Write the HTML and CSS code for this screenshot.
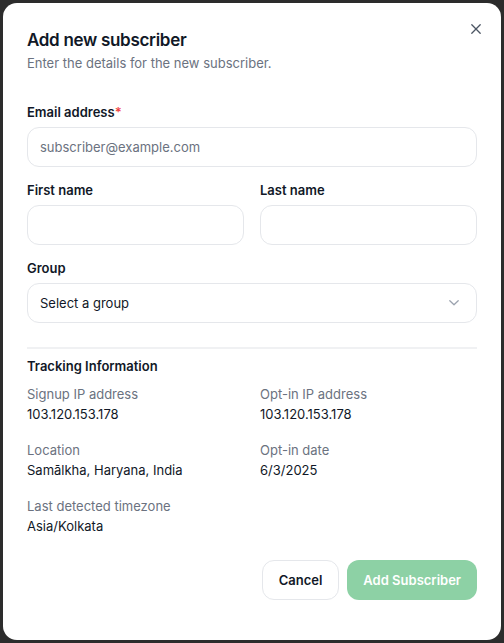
FILE: index.html
```html
<!DOCTYPE html>
<html lang="en">
<head>
<meta charset="utf-8">
<title>Add new subscriber</title>
<link rel="stylesheet" href="styles.css">
</head>
<body>
<div class="backdrop">
  <div class="modal" role="dialog">
    <button class="close" aria-label="Close">
      <svg width="12" height="12" viewBox="0 0 12 12"><path d="M1.8 1.8 L10.2 10.2 M10.2 1.8 L1.8 10.2" stroke="#4b5563" stroke-width="1.3" stroke-linecap="round"/></svg>
    </button>
    <header class="head">
      <h2 class="title">Add new subscriber</h2>
      <p class="subtitle">Enter the details for the new subscriber.</p>
    </header>
    <form class="form">
      <div class="field">
        <label class="label">Email address<span class="req">*</span></label>
        <div class="input placeholder">subscriber@example.com</div>
      </div>
      <div class="row">
        <div class="field">
          <label class="label">First name</label>
          <div class="input"></div>
        </div>
        <div class="field">
          <label class="label">Last name</label>
          <div class="input"></div>
        </div>
      </div>
      <div class="field">
        <label class="label">Group</label>
        <div class="input select">
          <span>Select a group</span>
          <svg width="12" height="8" viewBox="0 0 12 8"><path d="M1.8 1.8 L6 5.8 L10.2 1.8" fill="none" stroke="#9ca3af" stroke-width="1.3" stroke-linecap="round" stroke-linejoin="round"/></svg>
        </div>
      </div>
    </form>
    <section class="tracking">
      <h3 class="section-title">Tracking Information</h3>
      <div class="grid">
        <div class="item"><div class="k">Signup IP address</div><div class="v">103.120.153.178</div></div>
        <div class="item"><div class="k">Opt-in IP address</div><div class="v">103.120.153.178</div></div>
        <div class="item"><div class="k">Location</div><div class="v">Samālkha, Haryana, India</div></div>
        <div class="item"><div class="k">Opt-in date</div><div class="v">6/3/2025</div></div>
        <div class="item"><div class="k">Last detected timezone</div><div class="v">Asia/Kolkata</div></div>
      </div>
    </section>
    <footer class="actions">
      <button class="btn btn-cancel">Cancel</button>
      <button class="btn btn-primary">Add Subscriber</button>
    </footer>
  </div>
</div>
</body>
</html>
```

FILE: styles.css
```css
* { box-sizing: border-box; }
html, body {
  margin: 0;
  height: 643px;
  overflow: hidden;
}
body {
  background: #2c2c2c;
  font-family: Inter, "Noto Sans", sans-serif;
  color: #111827;
}
.backdrop {
  padding: 3px 3px 0 3px;
  height: 643px;
}
.modal {
  position: relative;
  width: 498px;
  background: #fff;
  border-radius: 14px;
  padding: 25px 24px 40px 24px;
}
.close {
  position: absolute;
  top: 19px;
  right: 18px;
  width: 14px;
  height: 14px;
  padding: 0;
  border: 0;
  background: transparent;
  display: flex;
  align-items: center;
  justify-content: center;
}
.head { margin-bottom: 29px; }
.title {
  margin: 0;
  font-size: 17px;
  letter-spacing: -0.3px;
  line-height: 24px;
  font-weight: 600;
  color: #111827;
}
.subtitle {
  margin: 1px 0 0;
  font-size: 13px;
  line-height: 20px;
  color: #6b7280;
}
.form {
  display: flex;
  flex-direction: column;
  gap: 13px;
}
.row {
  display: grid;
  grid-template-columns: 1fr 1fr;
  gap: 16px;
}
.field {
  display: flex;
  flex-direction: column;
  gap: 5px;
}
.label {
  font-size: 13px;
  line-height: 20px;
  font-weight: 600;
  color: #111827;
}
.req { color: #ef4444; }
.input {
  height: 40px;
  border: 1px solid #e5e7eb;
  border-radius: 12px;
  padding: 0 12px;
  display: flex;
  align-items: center;
  font-size: 13px;
  color: #111827;
}
.placeholder { color: #6b7280; }
.select {
  justify-content: space-between;
  padding-right: 16px;
}
.tracking {
  margin-top: 24px;
  border-top: 2px solid #f0f1f3;
  padding-top: 7px;
}
.section-title {
  margin: 0 0 9px;
  font-size: 13px;
  line-height: 20px;
  font-weight: 600;
  color: #111827;
}
.grid {
  display: grid;
  grid-template-columns: 1fr 1fr;
  column-gap: 16px;
  row-gap: 17px;
}
.k {
  font-size: 13px;
  line-height: 19px;
  color: #6b7280;
}
.v {
  font-size: 13px;
  line-height: 20px;
  color: #111827;
}
.actions {
  margin-top: 24px;
  display: flex;
  justify-content: flex-end;
  gap: 8px;
}
.btn {
  height: 40px;
  border-radius: 12px;
  font-family: inherit;
  font-size: 13px;
  font-weight: 600;
  padding: 0 16px;
  cursor: pointer;
}
.btn-cancel {
  background: #fff;
  border: 1px solid #e5e7eb;
  color: #111827;
}
.btn-primary {
  background: #8dd1a5;
  border: 0;
  color: #fff;
}
```
